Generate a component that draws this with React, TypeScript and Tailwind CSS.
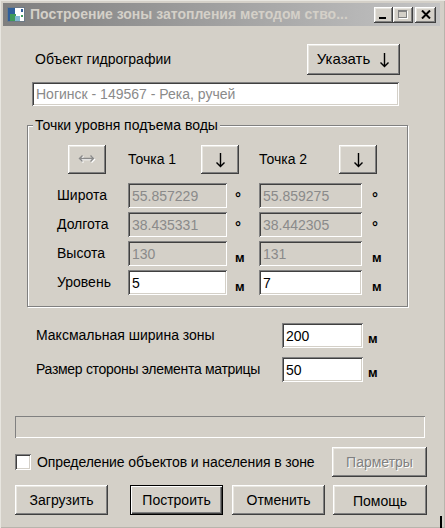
import React from "react";

const raised =
  "bg-[#d4d0c8] shadow-[inset_-1px_-1px_0_#404040,inset_1px_1px_0_#ffffff,inset_-2px_-2px_0_#808080,inset_2px_2px_0_#e8e6e0]";
const defaultBtn =
  "bg-[#d4d0c8] shadow-[inset_0_0_0_1px_#000000,inset_2px_2px_0_#ffffff,inset_-2px_-2px_0_#404040,inset_-3px_-3px_0_#808080]";
const sunken =
  "shadow-[inset_1px_1px_0_#808080,inset_-1px_-1px_0_#ffffff,inset_2px_2px_0_#404040,inset_-2px_-2px_0_#d4d0c8]";
const disabledText = "text-[#808080] [text-shadow:1px_1px_0_#ffffff]";

type FieldProps = { value: string; enabled?: boolean; width: string };

const Field: React.FC<FieldProps> = ({ value, enabled, width }) => (
  <input
    readOnly
    value={value}
    className={`${width} h-[25px] pl-[4px] pt-[1px] outline-none ${sunken} ${
      enabled ? "bg-white text-black" : "bg-[#d4d0c8] text-[#8a8a8a]"
    }`}
  />
);

const Btn: React.FC<{ children: React.ReactNode; className?: string; primary?: boolean }> = ({
  children,
  className = "",
  primary,
}) => (
  <button
    type="button"
    className={`flex items-center justify-center ${primary ? defaultBtn : raised} ${className}`}
  >
    {children}
  </button>
);

const ArrowDown = () => (
  <svg width="11" height="16" viewBox="0 0 11 16">
    <path d="M5.5 1 V14.5 M1.5 10.5 L5.5 14.5 L9.5 10.5" stroke="#000" strokeWidth="1.4" fill="none" />
  </svg>
);

const ArrowBoth = () => (
  <svg width="18" height="11" viewBox="0 0 18 11">
    <path d="M2.5 5.5 H16.5 M5.5 2.5 L2.5 5.5 L5.5 8.5 M13.5 2.5 L16.5 5.5 L13.5 8.5" stroke="#ffffff" strokeWidth="1.4" fill="none" />
    <path d="M1.5 4.5 H15.5 M4.5 1.5 L1.5 4.5 L4.5 7.5 M12.5 1.5 L15.5 4.5 L12.5 7.5" stroke="#8a8a8a" strokeWidth="1.4" fill="none" />
  </svg>
);

const TitleIcon = () => (
  <svg width="18" height="15" viewBox="0 0 18 15">
    <rect x="0.5" y="0.5" width="17" height="14" fill="#ffffff" stroke="#6d7a86" />
    <rect x="1" y="1" width="7" height="13" fill="#2f5f9a" />
    <rect x="3" y="7" width="6" height="7" fill="#3f9a5a" />
    <rect x="8" y="9" width="5" height="5" fill="#7fb7d0" />
    <rect x="14" y="2" width="2" height="3" fill="#2f5f9a" />
    <rect x="14" y="8" width="2" height="2" fill="#3f9a5a" />
  </svg>
);

const PointRow: React.FC<{ label: string; a: string; b: string; unit: string; enabled?: boolean }> = ({
  label,
  a,
  b,
  unit,
  enabled,
}) => {
  const unitCls = unit === "°" ? "font-bold text-[15px] pt-[6px]" : "pt-[8px] text-[13px] font-bold";
  return (
    <div className="flex items-center h-[25px]">
      <div className="w-[100px] pl-[29px]">{label}</div>
      <Field value={a} enabled={enabled} width="w-[99px]" />
      <div className={`w-[32px] pl-[8px] ${unitCls}`}>{unit}</div>
      <Field value={b} enabled={enabled} width="w-[103px]" />
      <div className={`pl-[10px] ${unitCls}`}>{unit}</div>
    </div>
  );
};

const App: React.FC = () => {
  return (
    <div className="relative w-[445px] h-[528px] overflow-hidden bg-[#d4d0c8] text-[14px] text-black font-['Liberation_Sans',Arial,sans-serif] shadow-[inset_1px_1px_0_#e8e6e0,inset_-1px_-1px_0_#b8b4ac]">
      {/* title bar */}
      <div className="ml-[3px] mt-[3px] w-[437px] h-[23px] flex items-center bg-linear-to-r from-[#7f7f7f] to-[#c4c4c4]">
        <div className="ml-[4px] flex">
          <TitleIcon />
        </div>
        <div className="ml-[5px] text-[14px] font-bold text-[#d4d0c8] whitespace-nowrap">
          Построение зоны затопления методом ство...
        </div>
        <div className="ml-auto flex items-center mr-[4px]">
          <div className={`w-[19px] h-[16px] relative ${raised}`}>
            <div className="absolute left-[5px] top-[10px] w-[7px] h-[2px] bg-black" />
          </div>
          <div className={`w-[20px] h-[16px] relative ${raised}`}>
            <div className="absolute left-[5px] top-[3px] w-[9px] h-[8px] border border-t-2 border-[#808080] shadow-[1px_1px_0_#ffffff]" />
          </div>
          <div className={`ml-[2px] w-[21px] h-[16px] flex items-center justify-center ${raised}`}>
            <svg width="10" height="9" viewBox="0 0 10 9">
              <path d="M1 0.5 L9 8.5 M9 0.5 L1 8.5" stroke="#000" strokeWidth="2" />
            </svg>
          </div>
        </div>
      </div>

      {/* object row */}
      <div className="mt-[18px] flex items-center h-[31px]">
        <div className="ml-[35px]">Объект гидрографии</div>
        <Btn className="ml-auto mr-[45px] w-[93px] h-[31px] text-[15px] gap-[9px]">
          Указать
          <ArrowDown />
        </Btn>
      </div>
      <div className="mt-[7px] ml-[32px]">
        <input
          readOnly
          value="Ногинск - 149567 - Река, ручей"
          className={`w-[367px] h-[24px] pl-[4px] bg-white text-[#8a8a8a] outline-none ${sunken}`}
        />
      </div>

      {/* group box */}
      <div className="relative mt-[19px] ml-[27px] w-[381px] h-[182px] border border-[#808080] shadow-[inset_1px_1px_0_#ffffff,1px_1px_0_#ffffff]">
        <div className="absolute left-[5px] -top-[10px] px-[2px] bg-[#d4d0c8] leading-[18px]">
          Точки уровня подъема воды
        </div>
        <div className="mt-[19px] flex items-center h-[29px]">
          <Btn className="ml-[40px] w-[38px] h-[29px]">
            <ArrowBoth />
          </Btn>
          <div className="ml-[22px] w-[73px]">Точка 1</div>
          <Btn className="w-[38px] h-[29px]">
            <ArrowDown />
          </Btn>
          <div className="ml-[20px] w-[80px]">Точка 2</div>
          <Btn className="w-[38px] h-[29px]">
            <ArrowDown />
          </Btn>
        </div>
        <div className="mt-[9px] flex flex-col gap-[4px]">
          <PointRow label="Широта" a="55.857229" b="55.859275" unit="°" />
          <PointRow label="Долгота" a="38.435331" b="38.442305" unit="°" />
          <PointRow label="Высота" a="130" b="131" unit="м" />
          <PointRow label="Уровень" a="5" b="7" unit="м" enabled />
        </div>
      </div>

      {/* zone settings */}
      <div className="mt-[16px] flex items-center h-[25px] pl-[36px]">
        <div className="w-[246px]">Максмальная ширина зоны</div>
        <Field value="200" enabled width="w-[81px]" />
        <div className="ml-[5px] pt-[6px] text-[13px] font-bold">м</div>
      </div>
      <div className="mt-[9px] flex items-center h-[25px] pl-[36px]">
        <div className="w-[246px] tracking-[-0.3px]">Размер стороны элемента матрицы</div>
        <Field value="50" enabled width="w-[81px]" />
        <div className="ml-[5px] pt-[6px] text-[13px] font-bold">м</div>
      </div>

      {/* progress */}
      <div className="mt-[34px] ml-[15px] w-[410px] h-[22px] shadow-[inset_1px_1px_0_#808080,inset_-1px_-1px_0_#ffffff]" />

      {/* checkbox row */}
      <div className="mt-[9px] flex items-center h-[30px]">
        <div className={`ml-[15px] w-[16px] h-[16px] bg-white ${sunken}`} />
        <div className="ml-[6px] tracking-[-0.1px]">Определение объектов и населения в зоне</div>
        <Btn className={`ml-auto mr-[18px] w-[95px] h-[30px] ${disabledText}`}>Парметры</Btn>
      </div>

      {/* buttons */}
      <div className="mt-[8px] flex items-center h-[30px]">
        <Btn className="ml-[15px] w-[93px] h-[30px]">Загрузить</Btn>
        <Btn primary className="ml-[22px] w-[93px] h-[30px]">
          Построить
        </Btn>
        <Btn className="ml-[9px] w-[93px] h-[30px]">Отменить</Btn>
        <Btn className="ml-[8px] w-[94px] h-[30px] pt-[2px]">Помощь</Btn>
      </div>

      <div className="absolute left-[440px] top-[516px] w-[2px] h-[12px] bg-black" />
    </div>
  );
};

export default App;
